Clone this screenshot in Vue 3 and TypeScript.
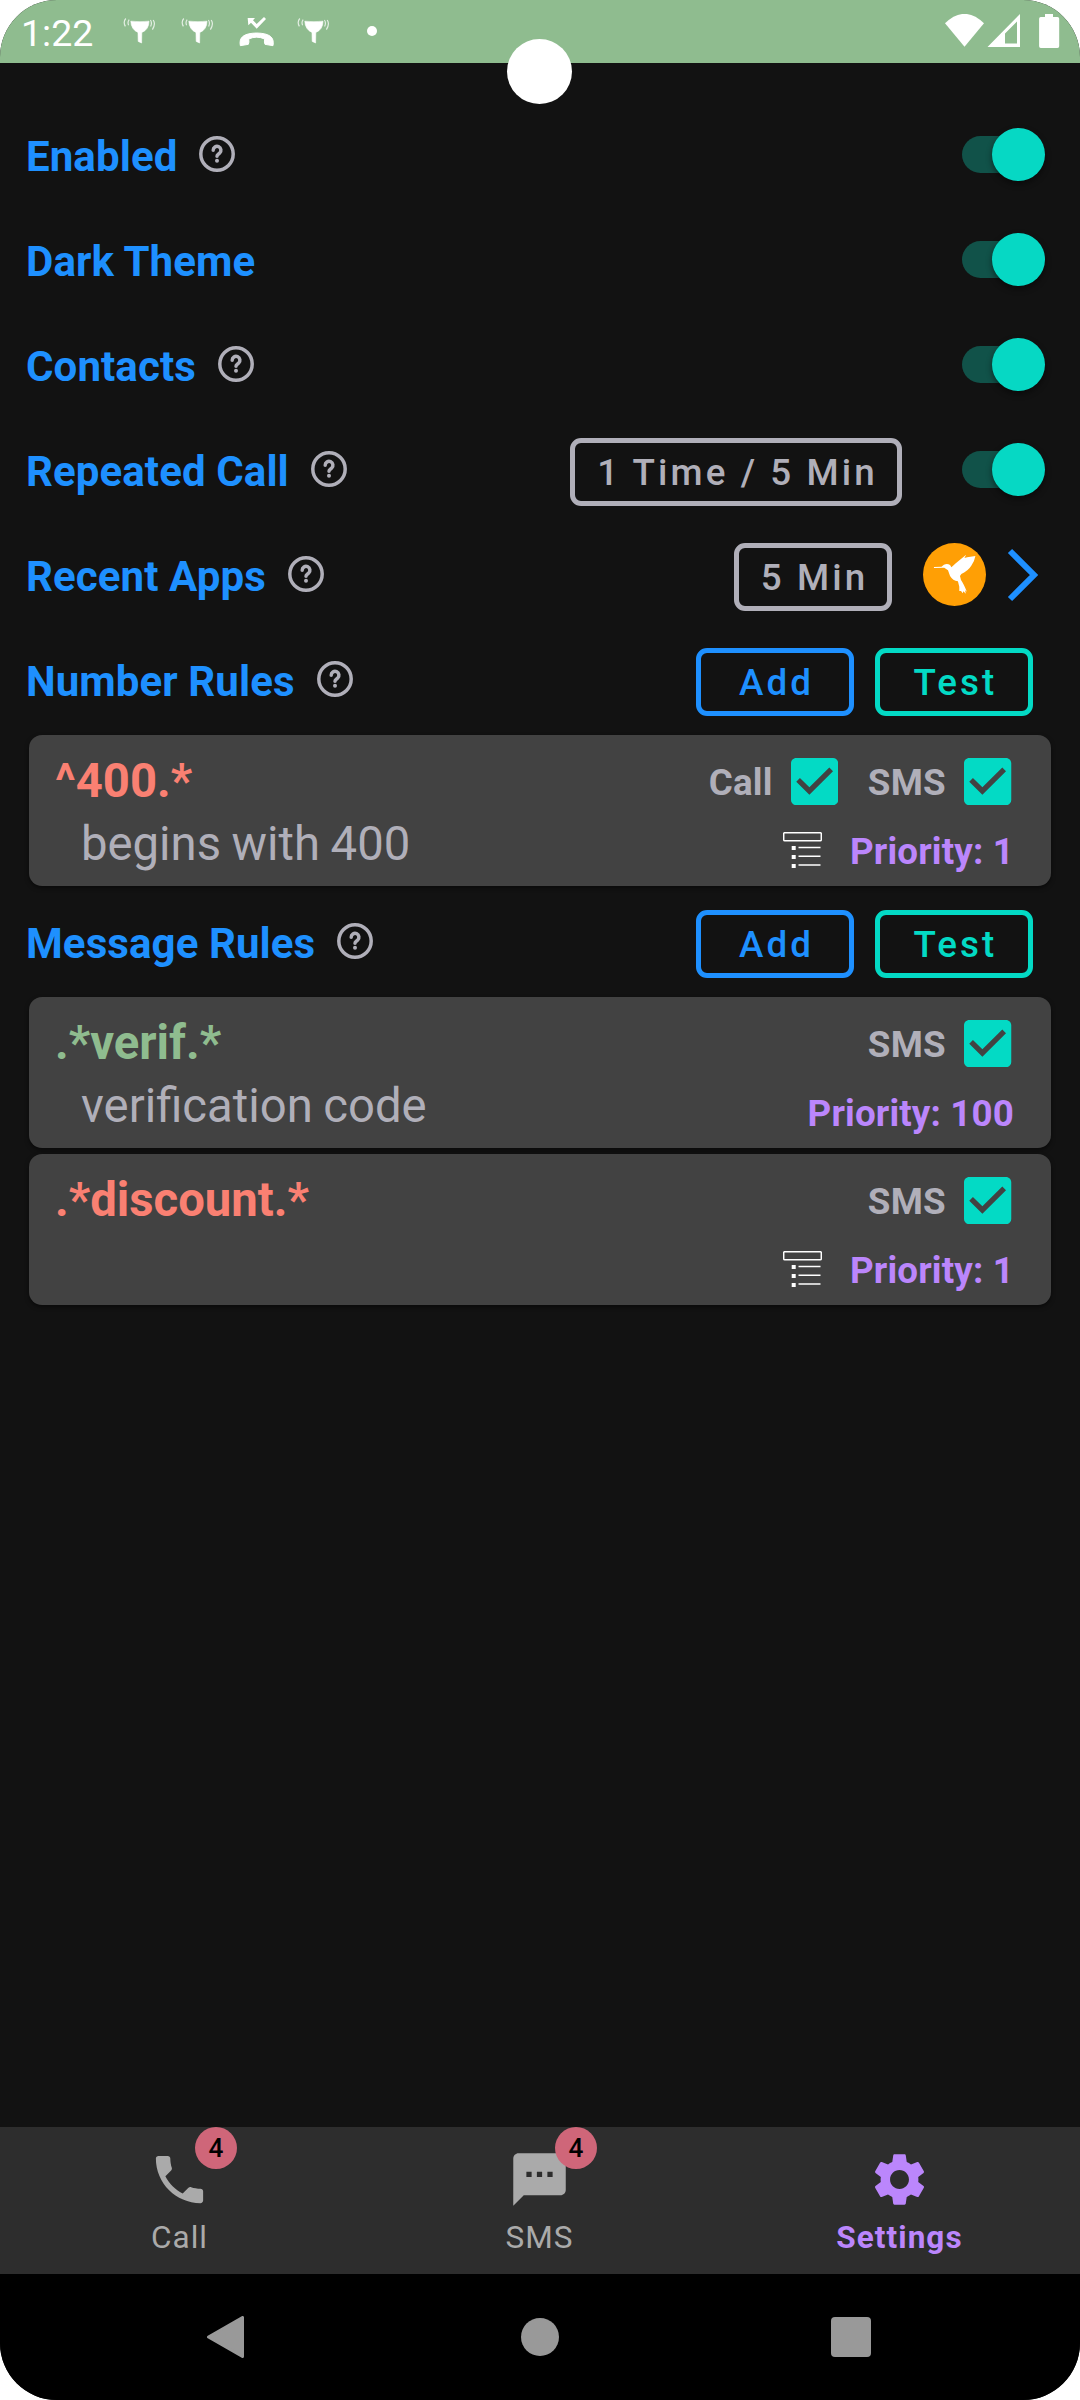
<script setup lang="ts">
interface Setting {
  label: string
  help: boolean
  toggle?: boolean
  button?: string
  apps?: boolean
}
interface Rule {
  pattern: string
  kind: 'block' | 'allow'
  desc: string
  targets: string[]
  priority: number
  log: boolean
}
interface Group {
  title: string
  rules: Rule[]
}

const settings: Setting[] = [
  { label: 'Enabled', help: true, toggle: true },
  { label: 'Dark Theme', help: false, toggle: true },
  { label: 'Contacts', help: true, toggle: true },
  { label: 'Repeated Call', help: true, toggle: true, button: '1 Time / 5 Min' },
  { label: 'Recent Apps', help: true, button: '5 Min', apps: true },
]

const groups: Group[] = [
  {
    title: 'Number Rules',
    rules: [
      { pattern: '^400.*', kind: 'block', desc: 'begins with 400', targets: ['Call', 'SMS'], priority: 1, log: true },
    ],
  },
  {
    title: 'Message Rules',
    rules: [
      { pattern: '.*verif.*', kind: 'allow', desc: 'verification code', targets: ['SMS'], priority: 100, log: false },
      { pattern: '.*discount.*', kind: 'block', desc: '', targets: ['SMS'], priority: 1, log: true },
    ],
  },
]

const notifications: string[] = ['filter', 'filter', 'missed', 'filter']

const tabs = [
  {
    name: 'Call',
    badge: 4,
    active: false,
    path: 'M6.62 10.79c1.44 2.83 3.76 5.14 6.59 6.59l2.2-2.2c.27-.27.67-.36 1.02-.24 1.12.37 2.33.57 3.57.57.55 0 1 .45 1 1V20c0 .55-.45 1-1 1-9.39 0-17-7.61-17-17 0-.55.45-1 1-1h3.5c.55 0 1 .45 1 1 0 1.25.2 2.45.57 3.57.11.35.03.74-.25 1.02l-2.2 2.2z',
  },
  {
    name: 'SMS',
    badge: 4,
    active: false,
    path: 'M20 2H4c-1.1 0-1.99.9-1.99 2L2 22l4-4h14c1.1 0 2-.9 2-2V4c0-1.1-.9-2-2-2zM9 11H7V9h2v2zm4 0h-2V9h2v2zm4 0h-2V9h2v2z',
  },
  {
    name: 'Settings',
    badge: 0,
    active: true,
    path: 'M19.14 12.94c.04-.3.06-.61.06-.94 0-.32-.02-.64-.07-.94l2.03-1.58c.18-.14.23-.41.12-.61l-1.92-3.32c-.12-.22-.37-.29-.59-.22l-2.39.96c-.5-.38-1.03-.7-1.62-.94l-.36-2.54c-.04-.24-.24-.41-.48-.41h-3.84c-.24 0-.43.17-.47.41l-.36 2.54c-.59.24-1.13.57-1.62.94l-2.39-.96c-.22-.08-.47 0-.59.22L2.74 8.87c-.12.21-.08.47.12.61l2.03 1.58c-.05.3-.09.63-.09.94s.02.64.07.94l-2.03 1.58c-.18.14-.23.41-.12.61l1.92 3.32c.12.22.37.29.59.22l2.39-.96c.5.38 1.03.7 1.62.94l.36 2.54c.05.24.24.41.48.41h3.84c.24 0 .44-.17.47-.41l.36-2.54c.59-.24 1.13-.56 1.62-.94l2.39.96c.22.08.47 0 .59-.22l1.92-3.32c.12-.22.07-.47-.12-.61l-2.01-1.58zM12 15.6c-1.98 0-3.6-1.62-3.6-3.6s1.62-3.6 3.6-3.6 3.6 1.62 3.6 3.6-1.62 3.6-3.6 3.6z',
  },
]
</script>

<template>
  <div class="screen">
    <header class="status">
      <span class="clock">1:22</span>
      <div class="notes">
        <template v-for="(n, i) in notifications" :key="i">
          <svg v-if="n === 'filter'" class="note" viewBox="0 0 35 30">
            <path d="M7.8 4.2Q17 5.2 26 4.2 25.8 12.800 18.800 15.400L18.600 26 15.200 24.400 15 15.400Q8.200 12.600 7.800 4.200Z" fill="#fff" stroke="#fff" stroke-width=".6" />
            <path d="M2.800 1.500Q-.2 5 2.400 9.400M6.200 2.600Q4.200 5 5.600 8.200M27.400 3Q29.400 5.600 27.600 9.600M30.200 3Q33 7 29.400 12.600" fill="none" stroke="#fff" stroke-width="1.200" opacity=".75" />
          </svg>
          <svg v-else class="note" viewBox="715 50 105 90">
            <path d="M741 53h22l-6 7 11 11 22-21 6 6-28 29-17-18-8 8z" fill="#fff" />
            <path d="M719 136C714 110 730 99 768 98 806 99 822 110 817 136L793 132Q790 126 792 116 768 105 744 116 746 126 743 132Z" fill="#fff" stroke="#fff" stroke-width="3" stroke-linejoin="round" />
          </svg>
        </template>
        <i class="more"></i>
      </div>
      <svg class="signals" viewBox="0 0 116 36">
        <path d="M0 9.3Q19.5-9.6 39 9.3L19.5 32.7Z" fill="#fff" />
        <path d="M42.5 33L75 0V33ZM60 19.5V29.5H72V7.5Z" fill="#fff" fill-rule="evenodd" />
        <path d="M100 0h8v3h4.500a1.700 1.700 0 0 1 1.700 1.700v27.600a1.700 1.700 0 0 1-1.700 1.700h-16.700a1.700 1.700 0 0 1-1.700-1.700v-27.600a1.700 1.700 0 0 1 1.700-1.700h4.200z" fill="#fff" />
      </svg>
      <i class="camera"></i>
    </header>

    <main class="content">
      <section v-for="s in settings" :key="s.label" class="row">
        <h2 class="label">{{ s.label }}</h2>
        <svg v-if="s.help" class="help" viewBox="0 0 36 36">
          <circle cx="18" cy="18" r="16.200" />
          <path d="M14.200 14.200a3.850 3.850 0 1 1 6.500 2.800c-1.500 1.300-2.700 1.800-2.700 3.200" />
          <circle class="dot" cx="18" cy="24.700" r="2" />
        </svg>
        <div class="controls">
          <button v-if="s.button" class="btn grey" :class="{ wide: s.toggle }">{{ s.button }}</button>
          <span v-if="s.toggle" class="switch"><i></i></span>
          <template v-if="s.apps">
            <svg class="app" viewBox="1111 429 184 189" preserveAspectRatio="none">
              <ellipse cx="1203" cy="523.500" rx="92" ry="94.500" fill="#ff9f05" />
              <path d="M1143 501L1165 500 1172 494Q1182 489 1190 495L1194 502 1205 491 1237 464 1232 474 1240 472 1264 468Q1261 486 1252 497 1243 512 1223 522L1219 528 1222 540Q1230 552 1239 575L1234 571 1236 581 1229 574 1227 580 1222 573 1217 573 1217 560 1213 544Q1198 542 1190 528L1184 511 1173 503 1143 504Z" fill="#fff" />
            </svg>
            <svg class="chevron" viewBox="0 0 32 54">
              <path d="M3 3L27 27 3 51" fill="none" stroke="#1e90ff" stroke-width="6" />
            </svg>
          </template>
        </div>
      </section>

      <template v-for="g in groups" :key="g.title">
        <section class="row">
          <h2 class="label">{{ g.title }}</h2>
          <svg class="help" viewBox="0 0 36 36">
            <circle cx="18" cy="18" r="16.200" />
            <path d="M14.200 14.200a3.850 3.850 0 1 1 6.500 2.800c-1.500 1.300-2.700 1.800-2.700 3.200" />
            <circle class="dot" cx="18" cy="24.700" r="2" />
          </svg>
          <div class="controls actions">
            <button class="btn blue">Add</button>
            <button class="btn teal">Test</button>
          </div>
        </section>
        <article v-for="r in g.rules" :key="r.pattern" class="card">
          <div class="info">
            <div class="pattern" :class="r.kind">{{ r.pattern }}</div>
            <div class="desc">{{ r.desc }}</div>
          </div>
          <div class="side">
            <div class="targets">
              <label v-for="t in r.targets" :key="t" class="target">
                <span>{{ t }}</span>
                <svg class="check" viewBox="3 3 18 18">
                  <path fill="#03dac5" d="M19 3H5c-1.110 0-2 .9-2 2v14c0 1.100.890 2 2 2h14c1.110 0 2-.9 2-2V5c0-1.100-.890-2-2-2zm-9 14l-5-5 1.410-1.410L10 14.170l7.590-7.590L19 8l-9 9z" />
                </svg>
              </label>
            </div>
            <div class="meta">
              <svg v-if="r.log" class="list" viewBox="0 0 39 37">
                <rect x=".7" y=".7" width="37.600" height="8" rx="1" fill="none" stroke="#fff" stroke-width="1.500" />
                <path d="M8.700 14h4v4h-4zM8.700 23h4v4h-4zM8.700 32h4v4h-4z" fill="#fff" />
                <path d="M15.500 15.500h22M15.500 24.200h22M15.500 33.100h22" stroke="#fff" stroke-width="1.500" />
              </svg>
              <span class="priority">Priority: {{ r.priority }}</span>
            </div>
          </div>
        </article>
      </template>
    </main>

    <nav class="tabs">
      <a v-for="t in tabs" :key="t.name" class="tab" :class="{ active: t.active }">
        <svg viewBox="0 0 24 24"><path :d="t.path" fill="currentColor" /></svg>
        <span>{{ t.name }}</span>
        <b v-if="t.badge" class="badge">{{ t.badge }}</b>
      </a>
    </nav>

    <footer class="system">
      <svg class="back" viewBox="0 0 37 42"><path d="M35.500 1.500V40.500L1.500 21Z" fill="#999" stroke="#999" stroke-width="3" stroke-linejoin="round" /></svg>
      <i class="home"></i>
      <i class="recents"></i>
    </footer>
  </div>
</template>

<style>
body {
  margin: 0;
  background: #fff;
}
</style>

<style scoped>
.screen {
  width: 1080px;
  height: 2400px;
  display: flex;
  flex-direction: column;
  background: #121212;
  border-radius: 57px;
  overflow: hidden;
  font-family: Roboto, sans-serif;
}
.status {
  position: relative;
  height: 63px;
  flex: none;
  display: flex;
  background: #8fbc8f;
}
.clock {
  width: 101px;
  padding: 11px 0 0 21px;
  box-sizing: border-box;
  font-size: 37.5px;
  line-height: 45px;
  color: #fff;
}
.notes {
  display: flex;
  gap: 23px;
  padding: 17px 0 0 22px;
}
.note {
  width: 35px;
  height: 30px;
}
.more {
  width: 10px;
  height: 10px;
  margin: 9px 0 0 12px;
  border-radius: 50%;
  background: #fff;
}
.signals {
  width: 116px;
  height: 36px;
  margin: 14px 19px 0 auto;
}
.camera {
  position: absolute;
  left: 507px;
  top: 39px;
  width: 65px;
  height: 65px;
  border-radius: 50%;
  background: #fff;
}
.content {
  flex: 1;
  padding-top: 39px;
}
.row {
  height: 105px;
  display: flex;
  align-items: center;
  padding-left: 26px;
}
.label {
  margin: 0;
  padding-top: 4px;
  font-size: 42px;
  line-height: 50px;
  font-weight: 700;
  letter-spacing: 0.1px;
  color: #1e90ff;
}
.help {
  width: 36px;
  height: 36px;
  margin: 0 0 2px 22px;
  fill: none;
  stroke: #b0afb9;
  stroke-width: 3.5;
  stroke-linecap: round;
}
.dot {
  fill: #b0afb9;
  stroke: none;
}
.controls {
  display: flex;
  align-items: center;
  margin-left: auto;
  padding-right: 35px;
}
.actions {
  gap: 21px;
  padding-right: 47px;
}
.btn {
  box-sizing: border-box;
  width: 158px;
  height: 68px;
  margin: 5px 0 0;
  padding: 2px 0 0 3px;
  border: 5px solid currentColor;
  border-radius: 11px;
  background: none;
  font: 500 36.75px/56px Roboto, sans-serif;
  letter-spacing: 3.1px;
  text-align: center;
}
.wide {
  width: 332px;
  margin-right: 60px;
}
.grey { color: #b0afb9; }
.blue { color: #1e90ff; }
.teal { color: #03dac5; }
.switch {
  display: flex;
  align-items: center;
  width: 83px;
  height: 53px;
}
.switch::before {
  content: '';
  flex: none;
  width: 74px;
  height: 37px;
  border-radius: 19px;
  background: #115249;
}
.switch i {
  flex: none;
  width: 53px;
  height: 53px;
  margin-left: -44px;
  border-radius: 50%;
  background: #06d8c4;
  box-shadow: 0 3px 6px rgba(0, 0, 0, 0.45);
}
.app {
  width: 63px;
  height: 63px;
  margin-left: 31px;
}
.chevron {
  width: 32px;
  height: 54px;
  margin: 0 6px 0 21px;
}
.card {
  box-sizing: border-box;
  height: 151px;
  margin: 3px 29px;
  padding: 0 37px 0 26px;
  display: flex;
  justify-content: space-between;
  background: #424242;
  border-radius: 13px;
  box-shadow: 0 2px 4px rgba(0, 0, 0, 0.5);
}
.card + .card {
  margin-top: 6px;
}
.info {
  padding-top: 18px;
  font-size: 47.25px;
}
.pattern {
  font-weight: 700;
  line-height: 56px;
}
.block { color: #fa8072; }
.allow { color: #8fbc8f; }
.desc {
  padding: 7px 0 0 26px;
  line-height: 56px;
  word-spacing: -1.2px;
  color: #b0afb9;
}
.side {
  display: flex;
  flex-direction: column;
  align-items: flex-end;
  padding-top: 23px;
  font-size: 36.75px;
  font-weight: 700;
  line-height: 44px;
  letter-spacing: 0.15px;
}
.targets {
  display: flex;
  gap: 29.5px;
  padding-right: 2.5px;
  color: #b0afb9;
}
.target {
  display: flex;
  align-items: center;
  gap: 18.5px;
}
.target span {
  padding-top: 3px;
}
.check {
  width: 47.25px;
  height: 47.25px;
}
.meta {
  display: flex;
  align-items: flex-start;
  gap: 28.5px;
  padding-top: 24px;
}
.list {
  width: 39px;
  height: 37px;
  margin-top: 3px;
}
.priority {
  padding-top: 1px;
  color: #bb86fc;
}
.tabs {
  flex: none;
  height: 147px;
  display: grid;
  grid-template-columns: repeat(3, 1fr);
  background: #2d2d2d;
}
.tab {
  position: relative;
  display: flex;
  flex-direction: column;
  align-items: center;
  padding-top: 21px;
  color: #aaa;
  font-size: 31.5px;
  line-height: 38px;
  letter-spacing: 1.05px;
}
.tab span {
  margin-right: 1px;
}
.tab svg {
  width: 63px;
  height: 63px;
  margin: 0 2px 8px 0;
}
.active {
  color: #bb86fc;
  font-weight: 700;
}
.badge {
  position: absolute;
  left: 195px;
  top: 0;
  width: 42px;
  height: 42px;
  border-radius: 50%;
  background: #cf6679;
  color: #000;
  font-size: 26.25px;
  line-height: 42px;
  font-weight: 500;
  letter-spacing: 0;
  text-align: center;
}
.system {
  flex: none;
  height: 126px;
  display: flex;
  align-items: center;
  box-sizing: border-box;
  padding-left: 207px;
  background: #000;
}
.back {
  width: 37px;
  height: 42px;
}
.home {
  width: 38px;
  height: 38px;
  margin: 0 272px 0 277px;
  border-radius: 50%;
  background: #999;
}
.recents {
  width: 40px;
  height: 40px;
  border-radius: 4px;
  background: #999;
}
</style>
